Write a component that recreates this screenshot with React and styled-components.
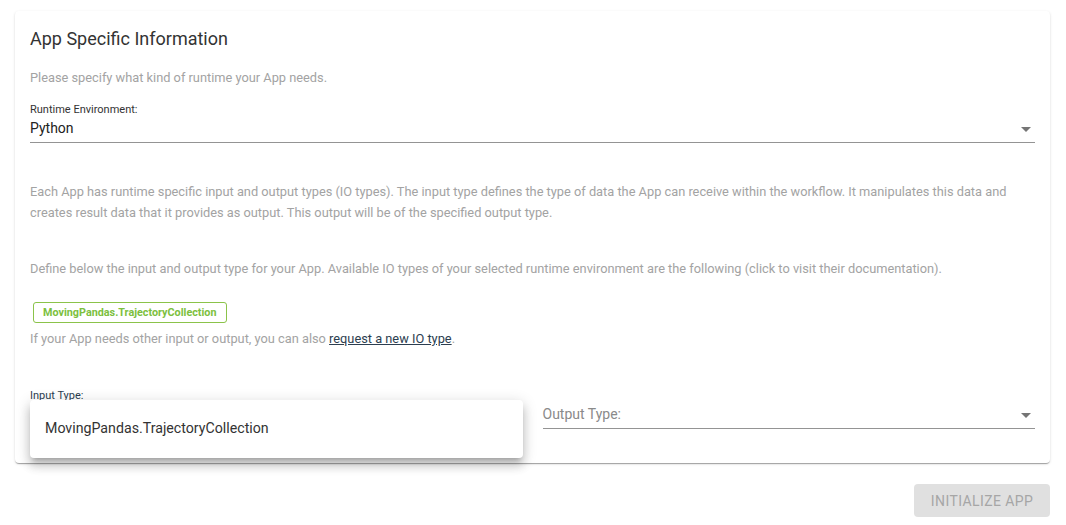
import styled, { createGlobalStyle } from 'styled-components';

const GlobalStyle = createGlobalStyle`
  body {
    margin: 0;
    background: #fff;
    font-family: Roboto, "Liberation Sans", Arial, sans-serif;
  }
`

const Page = styled.div`
  padding: 11px 16px 8px 15px;
  display: flex;
  flex-direction: column;
`

const Card = styled.div`
  background: #fff;
  border-radius: 4px;
  box-shadow: 0 2px 1px -1px rgba(0,0,0,.2), 0 1px 1px 0 rgba(0,0,0,.14), 0 1px 3px 0 rgba(0,0,0,.12);
  padding: 16px 15px 34px 15px;
  display: flex;
  flex-direction: column;
`

const Title = styled.h2`
  margin: 0;
  font-size: 18px;
  line-height: 24px;
  font-weight: 400;
  color: #333;
`

const Text = styled.p`
  margin: ${p => p.$mt || 0}px 0 0;
  font-size: 12.8px;
  line-height: 21px;
  color: #a3a3a3;
`

const Link = styled.a`
  color: #2c3e50;
  text-decoration: underline;
`

const Field = styled.div`
  position: relative;
  display: flex;
  flex-direction: column;
  margin-top: ${p => p.$mt || 0}px;
`

const Label = styled.label`
  font-size: 11px;
  line-height: 13px;
  height: 13px;
  color: ${p => p.$focused ? '#2c3e50' : '#333'};
`

const Input = styled.div`
  position: relative;
  display: flex;
  align-items: flex-start;
  height: 27px;
  padding: 4px 0 0;
  line-height: 17px;
  box-sizing: border-box;
  border-bottom: 1px solid #949494;
  font-size: 14px;
  color: ${p => p.$placeholder ? '#8a8a8a' : '#222'};
`

const Arrow = styled.svg`
  position: absolute;
  right: -3px;
  top: 50%;
  margin-top: -12px;
  width: 24px;
  height: 24px;
  fill: #757575;
`

const Chip = styled.span`
  align-self: flex-start;
  margin: 23px 0 0 3px;
  padding: 0 9px;
  height: 21px;
  box-sizing: border-box;
  display: inline-flex;
  align-items: center;
  border: 1px solid #8bc34a;
  border-radius: 3px;
  font-size: 10.8px;
  font-weight: 700;
  color: #7cbf3e;
`

const Row = styled.div`
  display: grid;
  grid-template-columns: 1fr 1fr;
  column-gap: 20px;
  margin-top: 40px;
  align-items: start;
`

const Menu = styled.ul`
  position: absolute;
  left: 0;
  right: 0;
  top: 11px;
  margin: 0;
  padding: 7px 0 9px;
  list-style: none;
  background: #fff;
  border-radius: 4px;
  box-shadow: 0px 5px 5px -3px rgba(0,0,0,0.2), 0px 8px 10px 1px rgba(0,0,0,0.14), 0px 3px 14px 2px rgba(0,0,0,0.12);
  z-index: 2;
`

const MenuItem = styled.li`
  height: 42px;
  display: flex;
  align-items: center;
  padding: 0 15px;
  font-size: 14.2px;
  color: #333;
`

const Actions = styled.div`
  display: flex;
  justify-content: flex-end;
  margin-top: 21px;
`

const Button = styled.button`
  border: none;
  border-radius: 4px;
  background: #e0e0e0;
  color: #a6a6a6;
  font-family: inherit;
  font-size: 14px;
  letter-spacing: 0.4px;
  text-transform: uppercase;
  height: 33px;
  width: 136px;
  padding: 0;
`

const DropArrow = () => (
  <Arrow viewBox="0 0 24 24"><path d="M7 10l5 5 5-5z" /></Arrow>
)

export default function App() {
  return (
    <>
      <GlobalStyle />
      <Page>
        <Card>
          <Title>App Specific Information</Title>
          <Text $mt={16}>Please specify what kind of runtime your App needs.</Text>
          <Field $mt={15}>
            <Label>Runtime Environment:</Label>
            <Input>Python<DropArrow /></Input>
          </Field>
          <Text $mt={38}>
            Each App has runtime specific input and output types (IO types). The input type defines the type of data the App can receive within the workflow. It manipulates this data and creates result data that it provides as output. This output will be of the specified output type.
          </Text>
          <Text $mt={35}>
            Define below the input and output type for your App. Available IO types of your selected runtime environment are the following (click to visit their documentation).
          </Text>
          <Chip>MovingPandas.TrajectoryCollection</Chip>
          <Text $mt={5}>
            If your App needs other input or output, you can also <Link href="#">request a new IO type</Link>.
          </Text>
          <Row>
            <Field>
              <Label $focused>Input Type:</Label>
              <Input $placeholder />
              <Menu>
                <MenuItem>MovingPandas.TrajectoryCollection</MenuItem>
              </Menu>
            </Field>
            <Field>
              <Label />
              <Input $placeholder>Output Type:<DropArrow /></Input>
            </Field>
          </Row>
        </Card>
        <Actions>
          <Button disabled>Initialize App</Button>
        </Actions>
      </Page>
    </>
  )
}
